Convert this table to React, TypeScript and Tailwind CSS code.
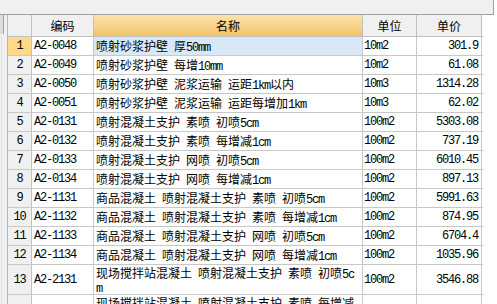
import React from "react";

type Row = { n: string; code: string; name: string[]; unit: string; price: string; h: string };

const rows: Row[] = [
  { n: "1", code: "A2-0048", name: ["喷射砂浆护壁 厚50mm"], unit: "10m2", price: "301.9", h: "h-[19px]" },
  { n: "2", code: "A2-0049", name: ["喷射砂浆护壁 每增10mm"], unit: "10m2", price: "61.08", h: "h-[19px]" },
  { n: "3", code: "A2-0050", name: ["喷射砂浆护壁 泥浆运输 运距1km以内"], unit: "10m3", price: "1314.28", h: "h-[19px]" },
  { n: "4", code: "A2-0051", name: ["喷射砂浆护壁 泥浆运输 运距每增加1km"], unit: "10m3", price: "62.02", h: "h-[19px]" },
  { n: "5", code: "A2-0131", name: ["喷射混凝土支护 素喷 初喷5cm"], unit: "100m2", price: "5303.08", h: "h-[19px]" },
  { n: "6", code: "A2-0132", name: ["喷射混凝土支护 素喷 每增减1cm"], unit: "100m2", price: "737.19", h: "h-[19px]" },
  { n: "7", code: "A2-0133", name: ["喷射混凝土支护 网喷 初喷5cm"], unit: "100m2", price: "6010.45", h: "h-[19px]" },
  { n: "8", code: "A2-0134", name: ["喷射混凝土支护 网喷 每增减1cm"], unit: "100m2", price: "897.13", h: "h-[19px]" },
  { n: "9", code: "A2-1131", name: ["商品混凝土 喷射混凝土支护 素喷 初喷5cm"], unit: "100m2", price: "5991.63", h: "h-[19px]" },
  { n: "10", code: "A2-1132", name: ["商品混凝土 喷射混凝土支护 素喷 每增减1cm"], unit: "100m2", price: "874.95", h: "h-[19px]" },
  { n: "11", code: "A2-1133", name: ["商品混凝土 喷射混凝土支护 网喷 初喷5cm"], unit: "100m2", price: "6704.4", h: "h-[19px]" },
  { n: "12", code: "A2-1134", name: ["商品混凝土 喷射混凝土支护 网喷 每增减1cm"], unit: "100m2", price: "1035.96", h: "h-[19px]" },
  { n: "13", code: "A2-2131", name: ["现场搅拌站混凝土 喷射混凝土支护 素喷 初喷5c", "m"], unit: "100m2", price: "3546.88", h: "h-[30px]" },
  { n: "14", code: "A2-2132", name: ["现场搅拌站混凝土 喷射混凝土支护 素喷 每增减", "1cm"], unit: "100m2", price: "828.61", h: "h-[30px]" },
];

function T({ s }: { s: string }) {
  const parts = s.split(/([\x00-\x7f]+)/).filter((p) => p.length > 0);
  return (
    <>
      {parts.map((p, i) =>
        /^[\x00-\x7f]+$/.test(p) ? (
          <span key={i} className="font-['Liberation_Mono',monospace] tracking-[-1.2px] whitespace-pre">
            {p}
          </span>
        ) : (
          <span key={i}>{p}</span>
        )
      )}
    </>
  );
}

export default function App() {
  return (
    <div className="w-[497px] h-[304px] overflow-hidden bg-white font-['Noto_Sans_CJK_SC',sans-serif] text-[12px] leading-[14px] text-black">
      <div className="h-[15px] w-[494px] bg-[#f0f0f0] border-b border-r border-[#a0a0a0]" />
      <div className="flex h-[289px]">
        <div className="w-[7px] bg-[#f0f0f0] flex flex-col">
          <div className="h-[19px] w-[4px] bg-[#dcdcdc] border-r border-[#a0a0a0]" />
          <div className="flex-1 w-[2px] border-r border-[#e2e2e2]" />
        </div>
        <div className="flex-1 border-l border-[#b8b8b8] bg-white">
          <div className="flex h-[22px] border-b border-[#c0c0c0] w-[475px]">
            <div className="w-[24px] bg-[#f0f0f0] border-r border-[#c0c0c0]" />
            <div className="w-[62px] bg-[#f0f0f0] border-r border-[#c0c0c0] flex items-center justify-center">编码</div>
            <div className="w-[269px] bg-gradient-to-b from-[#fde4ac] to-[#f1c365] border-r border-[#c0c0c0] flex items-center justify-center">名称</div>
            <div className="w-[54px] bg-[#f0f0f0] border-r border-[#c0c0c0] flex items-center justify-center">单位</div>
            <div className="w-[65px] bg-[#f0f0f0] border-r border-[#c0c0c0] flex items-center justify-center">单价</div>
          </div>
          {rows.map((r, i) => (
            <div key={r.n} className={`flex w-[475px] border-b border-[#c8c8c8] ${r.h}`}>
              <div
                className={`w-[24px] shrink-0 border-r border-[#c0c0c0] flex items-center justify-center ${
                  i === 0 ? "bg-[#ffd88b]" : "bg-[#f0f0f0]"
                }`}
              >
                <T s={r.n} />
              </div>
              <div className="w-[62px] shrink-0 border-r border-[#c8c8c8] flex items-center pl-[2px]">
                <T s={r.code} />
              </div>
              <div
                className={`w-[269px] shrink-0 border-r border-[#c8c8c8] flex flex-col justify-center pl-[2px] ${
                  i === 0 ? "bg-[#d9e8f7]" : ""
                }`}
              >
                {r.name.map((l, j) => (
                  <div key={j} className="whitespace-pre h-[14px]">
                    <T s={l} />
                  </div>
                ))}
              </div>
              <div className="w-[54px] shrink-0 border-r border-[#c8c8c8] flex items-center pl-[1px]">
                <T s={r.unit} />
              </div>
              <div className="w-[65px] shrink-0 border-r border-[#c8c8c8] flex items-center justify-end pr-[3px]">
                <T s={r.price} />
              </div>
            </div>
          ))}
        </div>
      </div>
    </div>
  );
}
